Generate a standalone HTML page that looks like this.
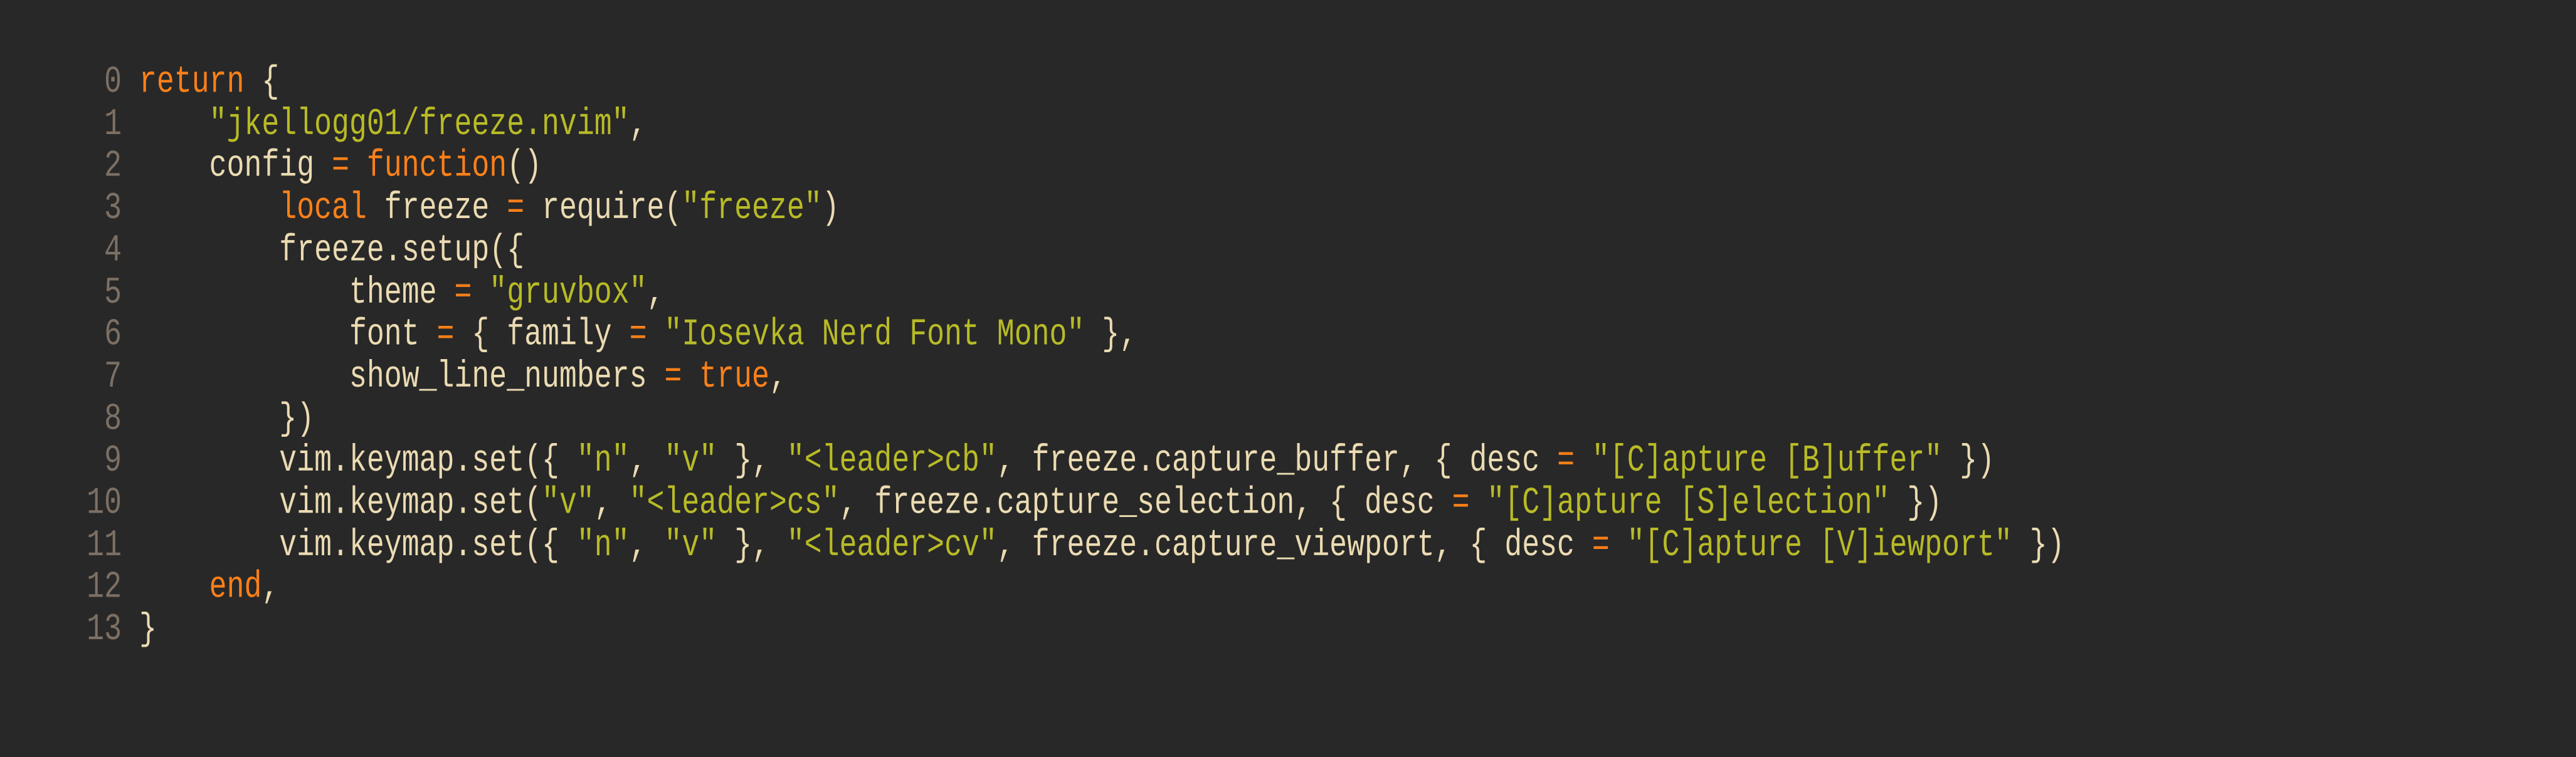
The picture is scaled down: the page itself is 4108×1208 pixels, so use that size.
<!DOCTYPE html>
<html><head><meta charset="utf-8"><style>
html,body{margin:0;padding:0;background:#282828;width:4108px;height:1208px;overflow:hidden}
pre{position:absolute;margin:0;top:97px;font-family:"Liberation Mono",monospace;font-size:46.53px;line-height:51.7px;transform:scaleY(1.3);transform-origin:0 0;color:#ebdbb2;white-space:pre}
#ln{left:138px;color:#7c6f64;text-align:right;width:56px}
#code{left:222px}
.k{color:#fe8019}.s{color:#b8bb26}
</style></head><body>
<pre id="ln">0
1
2
3
4
5
6
7
8
9
10
11
12
13</pre>
<pre id="code"><span class="k">return</span> {
    <span class="s">"jkellogg01/freeze.nvim"</span>,
    config <span class="k">=</span> <span class="k">function</span>()
        <span class="k">local</span> freeze <span class="k">=</span> require(<span class="s">"freeze"</span>)
        freeze.setup({
            theme <span class="k">=</span> <span class="s">"gruvbox"</span>,
            font <span class="k">=</span> { family <span class="k">=</span> <span class="s">"Iosevka Nerd Font Mono"</span> },
            show_line_numbers <span class="k">=</span> <span class="k">true</span>,
        })
        vim.keymap.set({ <span class="s">"n"</span>, <span class="s">"v"</span> }, <span class="s">"&lt;leader&gt;cb"</span>, freeze.capture_buffer, { desc <span class="k">=</span> <span class="s">"[C]apture [B]uffer"</span> })
        vim.keymap.set(<span class="s">"v"</span>, <span class="s">"&lt;leader&gt;cs"</span>, freeze.capture_selection, { desc <span class="k">=</span> <span class="s">"[C]apture [S]election"</span> })
        vim.keymap.set({ <span class="s">"n"</span>, <span class="s">"v"</span> }, <span class="s">"&lt;leader&gt;cv"</span>, freeze.capture_viewport, { desc <span class="k">=</span> <span class="s">"[C]apture [V]iewport"</span> })
    <span class="k">end</span>,
}</pre>
</body></html>
